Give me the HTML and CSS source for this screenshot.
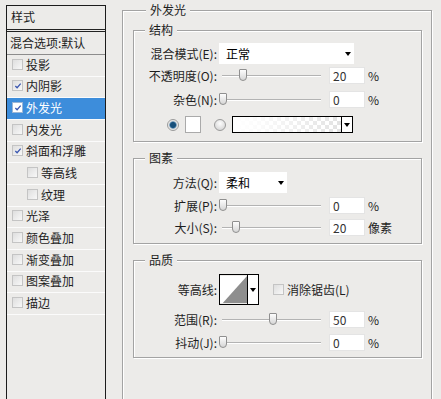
FILE: index.html
```html
<!DOCTYPE html>
<html lang="zh-CN">
<head>
<meta charset="utf-8">
<title>图层样式 - 外发光</title>
<link rel="stylesheet" href="styles.css">
</head>
<body>
<div class="dialog">
  <aside class="styles-list">
    <div class="list-header">样式</div>
    <div class="list-blend">混合选项:默认</div>
    <ul class="list-items">
      <li class="item"><span class="cb"></span>投影</li>
      <li class="item"><span class="cb"><svg viewBox="0 0 9 9"><path d="M1.5 4.5 L3.5 6.5 L7.5 1.8" /></svg></span>内阴影</li>
      <li class="item selected"><span class="cb"><svg viewBox="0 0 9 9"><path d="M1.5 4.5 L3.5 6.5 L7.5 1.8" /></svg></span>外发光</li>
      <li class="item"><span class="cb"></span>内发光</li>
      <li class="item"><span class="cb"><svg viewBox="0 0 9 9"><path d="M1.5 4.5 L3.5 6.5 L7.5 1.8" /></svg></span>斜面和浮雕</li>
      <li class="item sub"><span class="cb"></span>等高线</li>
      <li class="item sub"><span class="cb"></span>纹理</li>
      <li class="item"><span class="cb"></span>光泽</li>
      <li class="item"><span class="cb"></span>颜色叠加</li>
      <li class="item"><span class="cb"></span>渐变叠加</li>
      <li class="item"><span class="cb"></span>图案叠加</li>
      <li class="item"><span class="cb"></span>描边</li>
    </ul>
  </aside>

  <main class="panel">
    <fieldset class="group outer">
      <legend class="outer-legend">外发光</legend>

      <fieldset class="group section sec-structure">
        <legend>结构</legend>
        <div class="row row-select">
          <span class="lbl">混合模式(E):</span>
          <div class="select wide"><span>正常</span><span class="arrow"></span></div>
        </div>
        <div class="row row-gap3">
          <span class="lbl">不透明度(O):</span>
          <div class="slider"><span class="thumb" style="left:20px"></span></div>
          <span class="num">20</span><span class="unit">%</span>
        </div>
        <div class="row row-gap7">
          <span class="lbl">杂色(N):</span>
          <div class="slider"><span class="thumb" style="left:0px"></span></div>
          <span class="num">0</span><span class="unit">%</span>
        </div>
        <div class="row row-fill">
          <span class="radio on"></span>
          <span class="swatch"></span>
          <span class="radio off"></span>
          <div class="gradient"><span class="ramp"></span><span class="drop"><span class="arrow"></span></span></div>
        </div>
      </fieldset>

      <fieldset class="group section sec-elements">
        <legend>图素</legend>
        <div class="row row-select">
          <span class="lbl">方法(Q):</span>
          <div class="select narrow"><span>柔和</span><span class="arrow"></span></div>
        </div>
        <div class="row row-gap4">
          <span class="lbl">扩展(P):</span>
          <div class="slider"><span class="thumb" style="left:0px"></span></div>
          <span class="num">0</span><span class="unit">%</span>
        </div>
        <div class="row row-gap5">
          <span class="lbl">大小(S):</span>
          <div class="slider"><span class="thumb" style="left:13px"></span></div>
          <span class="num">20</span><span class="unit">像素</span>
        </div>
      </fieldset>

      <fieldset class="group section sec-quality">
        <legend>品质</legend>
        <div class="row row-contour">
          <span class="lbl">等高线:</span>
          <div class="contour">
            <svg class="curve" viewBox="0 0 29 29" width="29" height="29"><rect width="29" height="29" fill="#fff"/><polygon points="3,29 29,0 29,29" fill="#8e8e8e"/></svg>
            <span class="drop"><span class="arrow"></span></span>
          </div>
          <span class="cb aa"></span><span class="aa-text">消除锯齿(L)</span>
        </div>
        <div class="row row-gap6">
          <span class="lbl">范围(R):</span>
          <div class="slider"><span class="thumb" style="left:50px"></span></div>
          <span class="num">50</span><span class="unit">%</span>
        </div>
        <div class="row row-gap6">
          <span class="lbl">抖动(J):</span>
          <div class="slider"><span class="thumb" style="left:0px"></span></div>
          <span class="num">0</span><span class="unit">%</span>
        </div>
      </fieldset>
    </fieldset>
  </main>
</div>
</body>
</html>
```

FILE: styles.css
```css
html, body {
  margin: 0;
  padding: 0;
}

body {
  width: 441px;
  height: 399px;
  overflow: hidden;
  background: #ecebe9;
  font-family: "Noto Sans CJK SC", "Noto Sans", sans-serif;
  font-size: 12px;
  color: #1e1e1e;
}

.dialog {
  display: flex;
  align-items: flex-start;
  padding-left: 6px;
}

/* ---------- left style list ---------- */
.styles-list {
  width: 100px;
  height: 394px;
  box-sizing: border-box;
  margin-top: 5px;
  border: 1px solid #1c1c1c;
  border-bottom: none;
}

.list-header {
  height: 23px;
  line-height: 22px;
  padding-left: 4px;
  border-bottom: 3px double #222;
}

.list-blend {
  height: 22px;
  line-height: 21px;
  padding-left: 3px;
  border-bottom: 1px solid #8c8c8c;
}

.list-items {
  list-style: none;
  margin: 0;
  padding: 0;
}

.item {
  height: 21.67px;
  box-sizing: border-box;
  border-bottom: 1px solid #fbfbfb;
  display: flex;
  align-items: center;
  gap: 3px;
  padding-left: 5px;
  padding-bottom: 2px;
}

.item.sub {
  padding-left: 20px;
}

.item.selected {
  background: #3d8ddb;
  color: #fff;
}

.cb {
  width: 11px;
  height: 11px;
  box-sizing: border-box;
  border: 1px solid #c4c4c4;
  background: linear-gradient(135deg, #dedede, #f8f8f8);
  display: inline-flex;
  align-items: center;
  justify-content: center;
  flex: none;
}

.cb svg {
  width: 8px;
  height: 8px;
}

.cb svg path {
  fill: none;
  stroke: #3a56b0;
  stroke-width: 1.4;
}

.item.selected .cb {
  background: #fff;
  border-color: #9bb6d6;
}

/* ---------- right panel ---------- */
.panel {
  margin-left: 16px;
  margin-top: 2px;
}

.group {
  margin: 0;
  min-inline-size: 0;
  box-sizing: border-box;
  border: 1px solid #a3a3a3;
  box-shadow: inset 1px 1px 0 #fff, 1px 1px 0 #fff;
}

.group legend {
  padding: 0 4px;
  line-height: 16px;
  background: #ecebe9;
}

.outer {
  width: 310px;
  height: 397px;
  padding: 0 9px 0 10px;
  border-bottom: 0;
}

.outer-legend {
  margin-left: 13px;
}

.section {
  width: 289px;
  padding: 0;
  margin-top: 8px;
}

.section legend {
  margin-left: 11px;
}

.sec-structure {
  margin-top: 4px;
  padding: 5px 0 8px;
}

.sec-elements {
  padding: 6px 0 7px;
}

.sec-quality {
  padding: 6px 0 6px;
}

.row {
  display: flex;
  align-items: center;
  height: 17px;
}

.row-select {
  height: 21px;
}

.row-gap3 { margin-top: 3px; }
.row-gap4 { margin-top: 4px; }
.row-gap5 { margin-top: 5px; }
.row-gap6 { margin-top: 6px; }
.row-gap7 { margin-top: 7px; }

.lbl {
  width: 83px;
  margin-right: 2px;
  text-align: right;
  white-space: nowrap;
  flex: none;
}

/* dropdowns */
.select {
  height: 21px;
  box-sizing: border-box;
  background: #fff;
  display: flex;
  align-items: center;
  justify-content: space-between;
  padding: 0 3px 0 7px;
  color: #000;
}

.select.wide { width: 135px; }
.select.narrow { width: 68px; }

.arrow {
  width: 0;
  height: 0;
  border-left: 3px solid transparent;
  border-right: 3px solid transparent;
  border-top: 4px solid #000;
}

/* sliders */
.slider {
  position: relative;
  width: 102px;
  height: 13px;
  margin-right: 8px;
  flex: none;
}

.slider::before {
  content: "";
  position: absolute;
  left: 3px;
  right: 0;
  top: 6px;
  height: 1px;
  background: #b3b3b3;
  box-shadow: 0 1px 0 #fff;
}

.thumb {
  position: absolute;
  top: 0;
  width: 8px;
  height: 12px;
  box-sizing: border-box;
  border: 1px solid #8f8f8f;
  border-radius: 1px 1px 4px 4px;
  background: linear-gradient(#fdfdfd, #d6d6d6);
}

.num {
  width: 36px;
  height: 17px;
  box-sizing: border-box;
  background: #fff;
  border: 1px solid #e4e4e4;
  padding-left: 3px;
  line-height: 15px;
  color: #333;
  flex: none;
}

.unit {
  margin-left: 3px;
}

/* fill row */
.row-fill {
  margin-top: 8px;
  padding-left: 33px;
}

.radio {
  width: 12px;
  height: 12px;
  box-sizing: border-box;
  border-radius: 50%;
  border: 1px solid #9a9a9a;
  flex: none;
}

.radio.on {
  background: radial-gradient(circle, #174f7a 0 2.5px, #4f86b0 3.2px, #d9d9d9 4px, #f2f2f2 5px);
}

.radio.off {
  margin-left: 13px;
  background: radial-gradient(circle at 50% 35%, #fdfdfd, #cdcdcd);
}

.swatch {
  width: 16px;
  height: 17px;
  box-sizing: border-box;
  margin-left: 6px;
  background: #fff;
  border: 1px solid #aaa;
}

.gradient {
  width: 121px;
  height: 17px;
  box-sizing: border-box;
  margin-left: 6px;
  border: 1px solid #000;
  display: flex;
}

.ramp {
  flex: 1;
  background:
    linear-gradient(to right, #fff 0%, rgba(255, 255, 255, 0.85) 25%, rgba(255, 255, 255, 0) 100%),
    repeating-conic-gradient(#e2e2e2 0 25%, #fff 0 50%) 0 0 / 8px 8px;
}

.drop {
  width: 10px;
  border-left: 1px solid #000;
  background: #fff;
  display: flex;
  align-items: center;
  justify-content: center;
  flex: none;
}

/* contour row */
.row-contour {
  height: 31px;
}

.contour {
  display: flex;
  width: 40px;
  height: 31px;
  box-sizing: border-box;
  border: 1px solid #000;
  flex: none;
}

.curve {
  display: block;
}

.cb.aa {
  margin-left: 14px;
}

.aa-text {
  margin-left: 3px;
}
```
